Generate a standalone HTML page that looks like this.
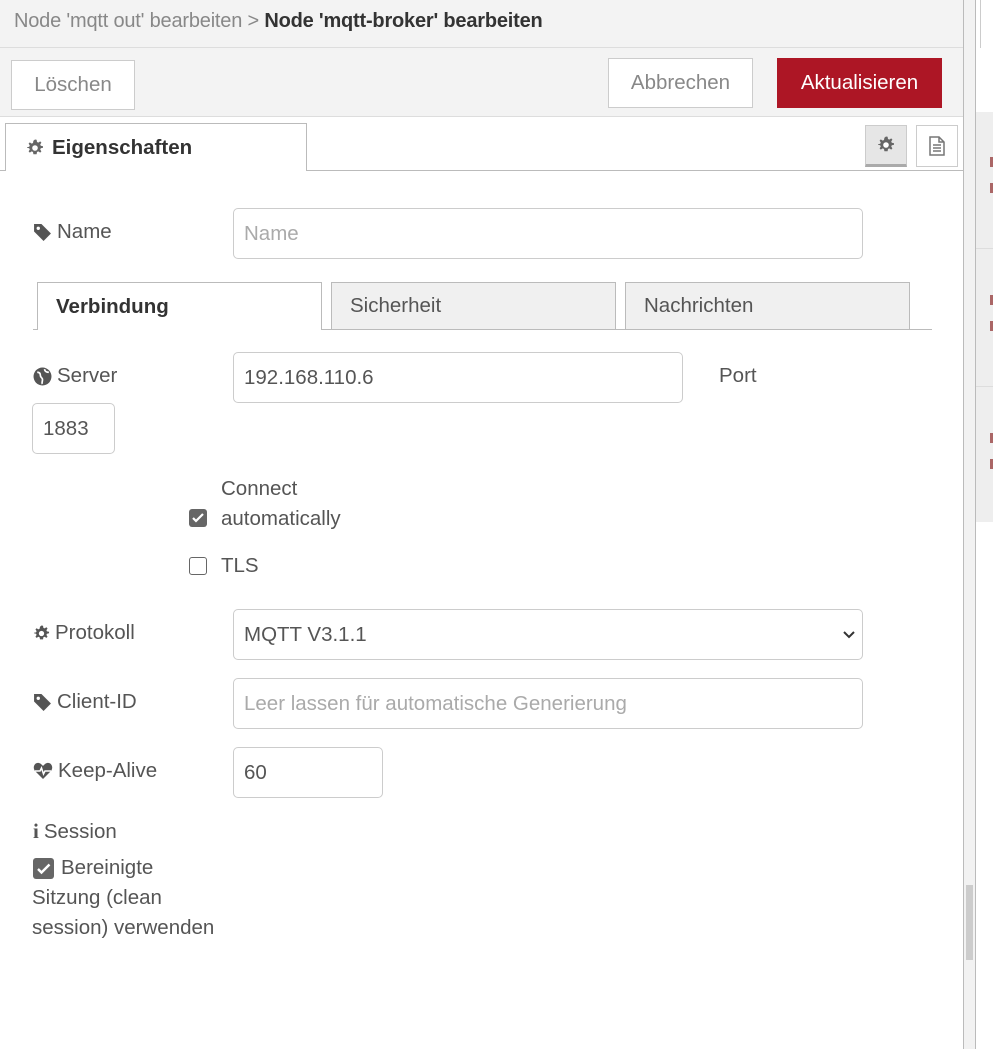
<!DOCTYPE html>
<html><head><style>
*{box-sizing:border-box;margin:0;padding:0}
body{width:993px;height:1049px;position:relative;overflow:hidden;background:#fff;font-family:"Liberation Sans",sans-serif;color:#555;font-size:20.5px}
.a{position:absolute}
.inp{position:absolute;border:1px solid #ccc;border-radius:5px;background:#fff;padding-left:10px;display:flex;align-items:center;font-size:20.5px;color:#555}
.ph{color:#aaa}
.lbl{position:absolute;font-size:20.5px;color:#555;display:flex;align-items:center;gap:5px}
.btn{position:absolute;border:1px solid #ccc;background:#fff;display:flex;align-items:center;justify-content:center;font-size:20.5px;color:#888}
.tab{position:absolute;border:1px solid #bbb;border-bottom:none;background:#f0f0f0;font-size:20.5px;color:#555;padding-left:18px;display:flex;align-items:center}
.cb{position:absolute;width:18px;height:18px;border-radius:3px}
</style></head><body>
<svg width="0" height="0" style="position:absolute"><defs><g id="gear"><path d="M9 0.5l1.6 0.3 .4 2.2 1.3 .6 1.9-1.2 1.2 1.2-1.2 1.9 .6 1.3 2.2 .4v1.6l-2.2 .4-.6 1.3 1.2 1.9-1.2 1.2-1.9-1.2-1.3 .6-.4 2.2H7.4l-.4-2.2-1.3-.6-1.9 1.2-1.2-1.2 1.2-1.9-.6-1.3-2.2-.4V8.2l2.2-.4 .6-1.3-1.2-1.9 1.2-1.2 1.9 1.2 1.3-.6 .4-2.2z" fill="currentColor"/><circle cx="9" cy="9" r="2.8" fill="#fff"/></g></defs></svg>
<div class="a" style="left:0;top:0;width:963px;height:48px;background:#f3f3f3;border-bottom:1px solid #ddd"></div>
<div class="a" style="left:14px;top:10px;font-size:20px;color:#888;letter-spacing:-0.2px">Node 'mqtt out' bearbeiten &gt; <b style="color:#333">Node 'mqtt-broker' bearbeiten</b></div>
<div class="a" style="left:0;top:48px;width:963px;height:69px;background:#f3f3f3;border-bottom:1px solid #ddd"></div>
<div class="btn" style="left:11px;top:60px;width:124px;height:50px">Löschen</div>
<div class="btn" style="left:608px;top:58px;width:145px;height:50px">Abbrechen</div>
<div class="btn" style="left:777px;top:58px;width:165px;height:50px;background:#ad1625;border-color:#ad1625;color:#fff">Aktualisieren</div>
<div class="a" style="left:0;top:170px;width:963px;border-top:1px solid #bbb"></div>
<div class="a" style="left:5px;top:123px;width:302px;height:48px;background:#fff;border:1px solid #bbb;border-bottom:none;font-weight:bold;color:#333;display:flex;align-items:center;padding-left:20px;gap:8px"><svg width="18" height="18" style="color:#666"><use href="#gear"/></svg>Eigenschaften</div>
<div class="a" style="left:865px;top:125px;width:42px;height:42px;background:#e6e6e6;border:1px solid #ccc;border-bottom:3px solid #aaa;display:flex;align-items:center;justify-content:center"><svg width="18" height="18" style="color:#666"><use href="#gear"/></svg></div>
<div class="a" style="left:916px;top:125px;width:42px;height:42px;background:#fff;border:1px solid #ccc;display:flex;align-items:center;justify-content:center">
<svg width="16" height="20" viewBox="0 0 16 20"><path d="M1 1h9l5 5v13H1z M10 1v5h5" fill="none" stroke="#777" stroke-width="1.5"/><path d="M4 9h8M4 12h8M4 15h8" stroke="#777" stroke-width="1.5"/></svg></div>

<div class="lbl" style="left:33px;top:220px"><svg width="19" height="19" viewBox="0 0 18 18"><path d="M1 1h7l9 9-7 7-9-9z" fill="#555"/><circle cx="5" cy="5" r="1.6" fill="#fff"/></svg>Name</div>
<div class="inp ph" style="left:233px;top:208px;width:630px;height:51px">Name</div>

<div class="a" style="left:33px;top:329px;width:899px;border-top:1px solid #bbb"></div>
<div class="tab" style="left:37px;top:282px;width:285px;height:48px;background:#fff;font-weight:bold;color:#333">Verbindung</div>
<div class="tab" style="left:331px;top:282px;width:285px;height:47px">Sicherheit</div>
<div class="tab" style="left:625px;top:282px;width:285px;height:47px">Nachrichten</div>

<div class="lbl" style="left:33px;top:364px"><svg width="19" height="19" viewBox="0 0 18 18"><circle cx="9" cy="9" r="8.5" fill="#555"/><path d="M4 5c2 0 3 1 3 3s2 2 2 4-1 3 0 4M11 2c0 2 2 3 4 3" stroke="#fff" stroke-width="1.6" fill="none"/></svg>Server</div>
<div class="inp" style="left:233px;top:352px;width:450px;height:51px">192.168.110.6</div>
<div class="a" style="left:719px;top:364px">Port</div>
<div class="inp" style="left:32px;top:403px;width:83px;height:51px">1883</div>

<div class="cb" style="left:189px;top:509px;background:#666"><svg width="18" height="18"><path d="M4 9l3 3 7-7" stroke="#fff" stroke-width="2.2" fill="none"/></svg></div>
<div class="a" style="left:221px;top:474px;line-height:30px">Connect<br>automatically</div>
<div class="cb" style="left:189px;top:557px;border:1.5px solid #666"></div>
<div class="a" style="left:221px;top:554px">TLS</div>

<div class="lbl" style="left:33px;top:621px"><svg width="17" height="17" viewBox="0 0 18 18" style="color:#555"><use href="#gear"/></svg>Protokoll</div>
<div class="inp" style="left:233px;top:609px;width:630px;height:51px">MQTT V3.1.1<svg class="a" style="right:6px;top:20px" width="14" height="10"><path d="M2 2l5 5 5-5" stroke="#333" stroke-width="2" fill="none"/></svg></div>
<div class="lbl" style="left:33px;top:690px"><svg width="19" height="19" viewBox="0 0 18 18"><path d="M1 1h7l9 9-7 7-9-9z" fill="#555"/><circle cx="5" cy="5" r="1.6" fill="#fff"/></svg>Client-ID</div>
<div class="inp ph" style="left:233px;top:678px;width:630px;height:51px">Leer lassen für automatische Generierung</div>
<div class="lbl" style="left:33px;top:759px"><svg width="20" height="18" viewBox="0 0 20 18"><path d="M10 17L2 9C-1 5 2 0 6 1c2 .5 3 2 4 3 1-1 2-2.5 4-3 4-1 7 4 4 8z" fill="#555"/><path d="M2 9h5l1.5-3 2 6 1.5-3h6" stroke="#fff" stroke-width="1.5" fill="none"/></svg>Keep-Alive</div>
<div class="inp" style="left:233px;top:747px;width:150px;height:51px">60</div>
<div class="lbl" style="left:33px;top:819px"><b style="font-family:'Liberation Serif',serif;font-size:21px">i</b>Session</div>
<div class="cb" style="left:33px;top:858px;width:21px;height:21px;background:#666"><svg width="21" height="21"><path d="M5 11l3.5 3.5 8-8" stroke="#fff" stroke-width="2.4" fill="none"/></svg></div>
<div class="a" style="left:61px;top:853px;line-height:30px">Bereinigte</div>
<div class="a" style="left:32px;top:883px;line-height:30px">Sitzung (clean</div>
<div class="a" style="left:32px;top:913px;line-height:30px">session) verwenden</div>

<div class="a" style="left:963px;top:0;width:13px;height:1049px;background:#f2f2f2;border-left:1px solid #bbb;border-right:1px solid #bbb"></div>
<div class="a" style="left:966px;top:885px;width:7px;height:75px;background:#ccc"></div>
<div class="a" style="left:976px;top:112px;width:17px;height:410px;background:#eee"></div>
<div class="a" style="left:976px;top:248px;width:17px;border-top:1px solid #ddd"></div>
<div class="a" style="left:976px;top:386px;width:17px;border-top:1px solid #ddd"></div>
<div class="a" style="left:990px;top:157px;width:3px;height:10px;background:#a66"></div>
<div class="a" style="left:990px;top:183px;width:3px;height:10px;background:#a66"></div>
<div class="a" style="left:990px;top:295px;width:3px;height:10px;background:#a66"></div>
<div class="a" style="left:990px;top:321px;width:3px;height:10px;background:#a66"></div>
<div class="a" style="left:990px;top:433px;width:3px;height:10px;background:#a66"></div>
<div class="a" style="left:990px;top:459px;width:3px;height:10px;background:#a66"></div>
<div class="a" style="left:980px;top:0;width:13px;height:48px;border-left:1px solid #ccc"></div>
</body></html>
